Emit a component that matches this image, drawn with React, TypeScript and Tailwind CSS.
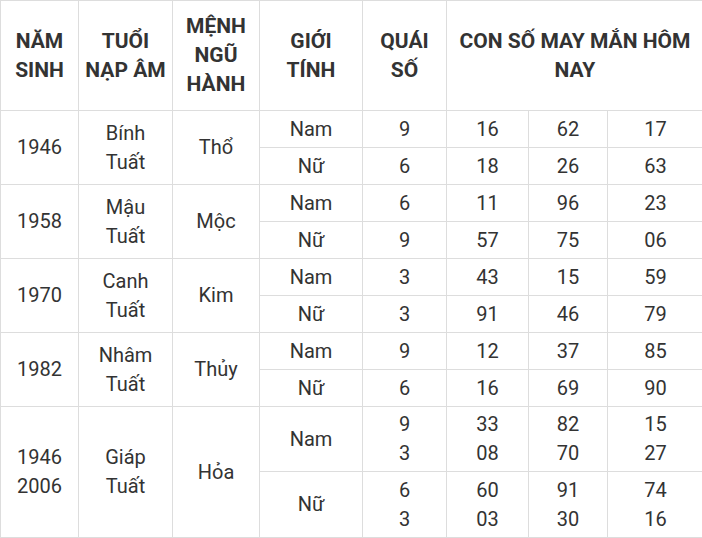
import React from "react";

type Row = {
  year: React.ReactNode;
  tuoi: React.ReactNode;
  menh: string;
  nam: { quai: React.ReactNode; so: React.ReactNode[] };
  nu: { quai: React.ReactNode; so: React.ReactNode[] };
  tall?: boolean;
};

const ROWS: Row[] = [
  {
    year: "1946",
    tuoi: <>Bính<br />Tuất</>,
    menh: "Thổ",
    nam: { quai: "9", so: ["16", "62", "17"] },
    nu: { quai: "6", so: ["18", "26", "63"] },
  },
  {
    year: "1958",
    tuoi: <>Mậu<br />Tuất</>,
    menh: "Mộc",
    nam: { quai: "6", so: ["11", "96", "23"] },
    nu: { quai: "9", so: ["57", "75", "06"] },
  },
  {
    year: "1970",
    tuoi: <>Canh<br />Tuất</>,
    menh: "Kim",
    nam: { quai: "3", so: ["43", "15", "59"] },
    nu: { quai: "3", so: ["91", "46", "79"] },
  },
  {
    year: "1982",
    tuoi: <>Nhâm<br />Tuất</>,
    menh: "Thủy",
    nam: { quai: "9", so: ["12", "37", "85"] },
    nu: { quai: "6", so: ["16", "69", "90"] },
  },
  {
    year: <>1946<br />2006</>,
    tuoi: <>Giáp<br />Tuất</>,
    menh: "Hỏa",
    nam: {
      quai: <>9<br />3</>,
      so: [<>33<br />08</>, <>82<br />70</>, <>15<br />27</>],
    },
    nu: {
      quai: <>6<br />3</>,
      so: [<>60<br />03</>, <>91<br />30</>, <>74<br />16</>],
    },
    tall: true,
  },
];

const cell = "border border-[#dddddd] p-0 text-center align-middle";

export default function App() {
  return (
    <div className="w-[702px] h-[538px] overflow-hidden bg-white">
      <table
        className="table-fixed border-collapse w-[703px] text-[20px] leading-[29px] text-[#333333]"
        style={{ fontFamily: "Roboto, 'Liberation Sans', sans-serif" }}>
        <colgroup>
          <col className="w-[78px]" />
          <col className="w-[94px]" />
          <col className="w-[87px]" />
          <col className="w-[103px]" />
          <col className="w-[84px]" />
          <col className="w-[82px]" />
          <col className="w-[79px]" />
          <col className="w-[96px]" />
        </colgroup>
        <thead>
          <tr className="h-[110px] font-bold text-[21px]">
            <th className={cell}>NĂM<br />SINH</th>
            <th className={cell}>TUỔI<br />NẠP ÂM</th>
            <th className={cell}>MỆNH<br />NGŨ<br />HÀNH</th>
            <th className={cell}>GIỚI<br />TÍNH</th>
            <th className={cell}>QUÁI<br />SỐ</th>
            <th className={cell} colSpan={3}>
              CON SỐ MAY MẮN HÔM<br />NAY
            </th>
          </tr>
        </thead>
        <tbody>
          {ROWS.map((r, i) => (
            <React.Fragment key={i}>
              <tr className={r.tall ? "h-[65px]" : "h-[37px]"}>
                <td className={cell} rowSpan={2}>{r.year}</td>
                <td className={cell} rowSpan={2}>{r.tuoi}</td>
                <td className={cell} rowSpan={2}>{r.menh}</td>
                <td className={cell}>Nam</td>
                <td className={cell}>{r.nam.quai}</td>
                {r.nam.so.map((s, j) => (
                  <td key={j} className={cell}>{s}</td>
                ))}
              </tr>
              <tr className={r.tall ? "h-[66px]" : "h-[37px]"}>
                <td className={cell}>Nữ</td>
                <td className={cell}>{r.nu.quai}</td>
                {r.nu.so.map((s, j) => (
                  <td key={j} className={cell}>{s}</td>
                ))}
              </tr>
            </React.Fragment>
          ))}
        </tbody>
      </table>
    </div>
  );
}
